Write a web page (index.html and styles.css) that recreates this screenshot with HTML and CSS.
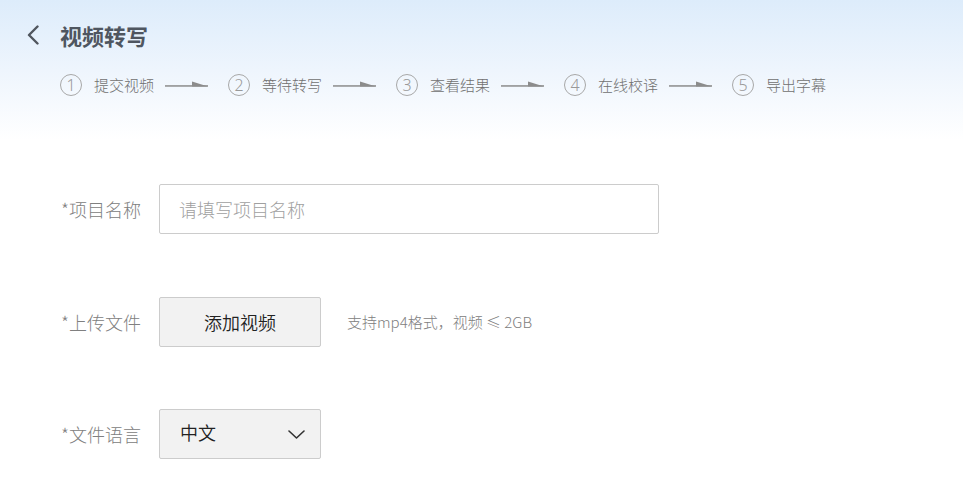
FILE: index.html
```html
<!DOCTYPE html>
<html lang="zh">
<head>
<meta charset="utf-8">
<title>视频转写</title>
<link rel="stylesheet" href="styles.css">
</head>
<body>
<div class="page">
  <header class="header">
    <div class="title-row">
      <span class="back">
        <svg width="14" height="20" viewBox="0 0 14 20"><path d="M11.5 1.5 L3 10 L11.5 18.5" fill="none" stroke="#50565e" stroke-width="2.4" stroke-linecap="round" stroke-linejoin="round"/></svg>
      </span>
      <h1 class="title">视频转写</h1>
    </div>
    <ol class="steps">
      <li class="step"><span class="num">1</span><span class="step-text">提交视频</span><span class="arrow"><svg width="43" height="8" viewBox="0 0 43 8"><rect x="0" y="5.2" width="43" height="1.5" fill="#8c8c8c"/><polygon points="27,1.5 43,6.5 27,6.5" fill="#8c8c8c"/></svg></span></li>
      <li class="step"><span class="num">2</span><span class="step-text">等待转写</span><span class="arrow"><svg width="43" height="8" viewBox="0 0 43 8"><rect x="0" y="5.2" width="43" height="1.5" fill="#8c8c8c"/><polygon points="27,1.5 43,6.5 27,6.5" fill="#8c8c8c"/></svg></span></li>
      <li class="step"><span class="num">3</span><span class="step-text">查看结果</span><span class="arrow"><svg width="43" height="8" viewBox="0 0 43 8"><rect x="0" y="5.2" width="43" height="1.5" fill="#8c8c8c"/><polygon points="27,1.5 43,6.5 27,6.5" fill="#8c8c8c"/></svg></span></li>
      <li class="step"><span class="num">4</span><span class="step-text">在线校译</span><span class="arrow"><svg width="43" height="8" viewBox="0 0 43 8"><rect x="0" y="5.2" width="43" height="1.5" fill="#8c8c8c"/><polygon points="27,1.5 43,6.5 27,6.5" fill="#8c8c8c"/></svg></span></li>
      <li class="step"><span class="num">5</span><span class="step-text">导出字幕</span></li>
    </ol>
  </header>

  <form class="form">
    <div class="row">
      <label class="label">*项目名称</label>
      <input class="input" type="text" placeholder="请填写项目名称">
    </div>
    <div class="row">
      <label class="label">*上传文件</label>
      <button type="button" class="btn">添加视频</button>
      <span class="hint">支持mp4格式，视频 ≤ 2GB</span>
    </div>
    <div class="row">
      <label class="label">*文件语言</label>
      <div class="select">
        <span class="select-text">中文</span>
        <svg width="17" height="9" viewBox="0 0 17 9"><path d="M1 1 L8.5 8 L16 1" fill="none" stroke="#333" stroke-width="1.6" stroke-linecap="round" stroke-linejoin="round"/></svg>
      </div>
    </div>
  </form>
</div>
</body>
</html>
```

FILE: styles.css
```css
* { box-sizing: border-box; }
html, body { margin: 0; padding: 0; }
body {
  font-family: "Noto Sans CJK SC", "Noto Sans", sans-serif;
  background: #fff;
  width: 963px;
  height: 480px;
  overflow: hidden;
}
.page {
  min-height: 480px;
  background: linear-gradient(180deg, #ddecfb 0px, #eef5fd 70px, #ffffff 140px);
}
.header {
  padding: 20px 0 0 0;
}
.title-row {
  display: flex;
  align-items: center;
  height: 30px;
}
.back {
  display: flex;
  align-items: center;
  width: 60px;
  padding-left: 26px;
  height: 30px;
}
.title {
  margin: 0;
  font-size: 22px;
  font-weight: 700;
  line-height: 30px;
  color: #4f5660;
}
.steps {
  list-style: none;
  margin: 24px 0 0 0;
  padding: 0 0 0 60px;
  display: flex;
  align-items: center;
  height: 22px;
}
.step {
  display: flex;
  align-items: center;
}
.num {
  width: 22px;
  height: 22px;
  border: 1px solid #a8a8a8;
  border-radius: 50%;
  display: flex;
  align-items: center;
  justify-content: center;
  font-size: 16px;
  line-height: 1;
  color: #999;
  font-weight: 300;
  font-family: "Noto Sans", "Open Sans", sans-serif;
}
.step-text {
  margin-left: 12px;
  width: 60px;
  font-size: 15px;
  font-weight: 300;
  line-height: 22px;
  color: #707070;
  white-space: nowrap;
}
.arrow {
  display: flex;
  margin-left: 11px;
  margin-right: 20px;
  position: relative;
  top: -1px;
}
.form {
  margin-top: 88px;
  padding-left: 60px;
  display: flex;
  flex-direction: column;
  gap: 62.5px;
}
.row {
  display: flex;
  align-items: center;
  height: 50px;
}
.label {
  width: 81px;
  margin-right: 18px;
  text-align: right;
  font-size: 18px;
  font-weight: 300;
  color: #808080;
  white-space: nowrap;
}
.input {
  width: 500px;
  height: 50px;
  border: 1px solid #ccc;
  border-radius: 2px;
  padding: 0 19px;
  font-family: inherit;
  font-size: 18px;
  font-weight: 300;
  color: #333;
  background: #fff;
  outline: none;
}
.input::placeholder { color: #a0a0a0; }
.btn {
  width: 162px;
  height: 50px;
  background: #f2f2f2;
  border: 1px solid #ccc;
  border-radius: 2px;
  font-family: inherit;
  font-size: 18px;
  font-weight: 350;
  color: #222;
  padding: 0;
}
.hint {
  margin-left: 26px;
  font-size: 15px;
  font-weight: 300;
  color: #808080;
}
.select {
  width: 162px;
  height: 50px;
  background: #f2f2f2;
  border: 1px solid #ccc;
  border-radius: 2px;
  display: flex;
  align-items: center;
  justify-content: space-between;
  padding: 0 15px 0 20px;
}
.select-text {
  font-size: 18px;
  font-weight: 350;
  color: #222;
  position: relative;
  top: -2px;
}
```
